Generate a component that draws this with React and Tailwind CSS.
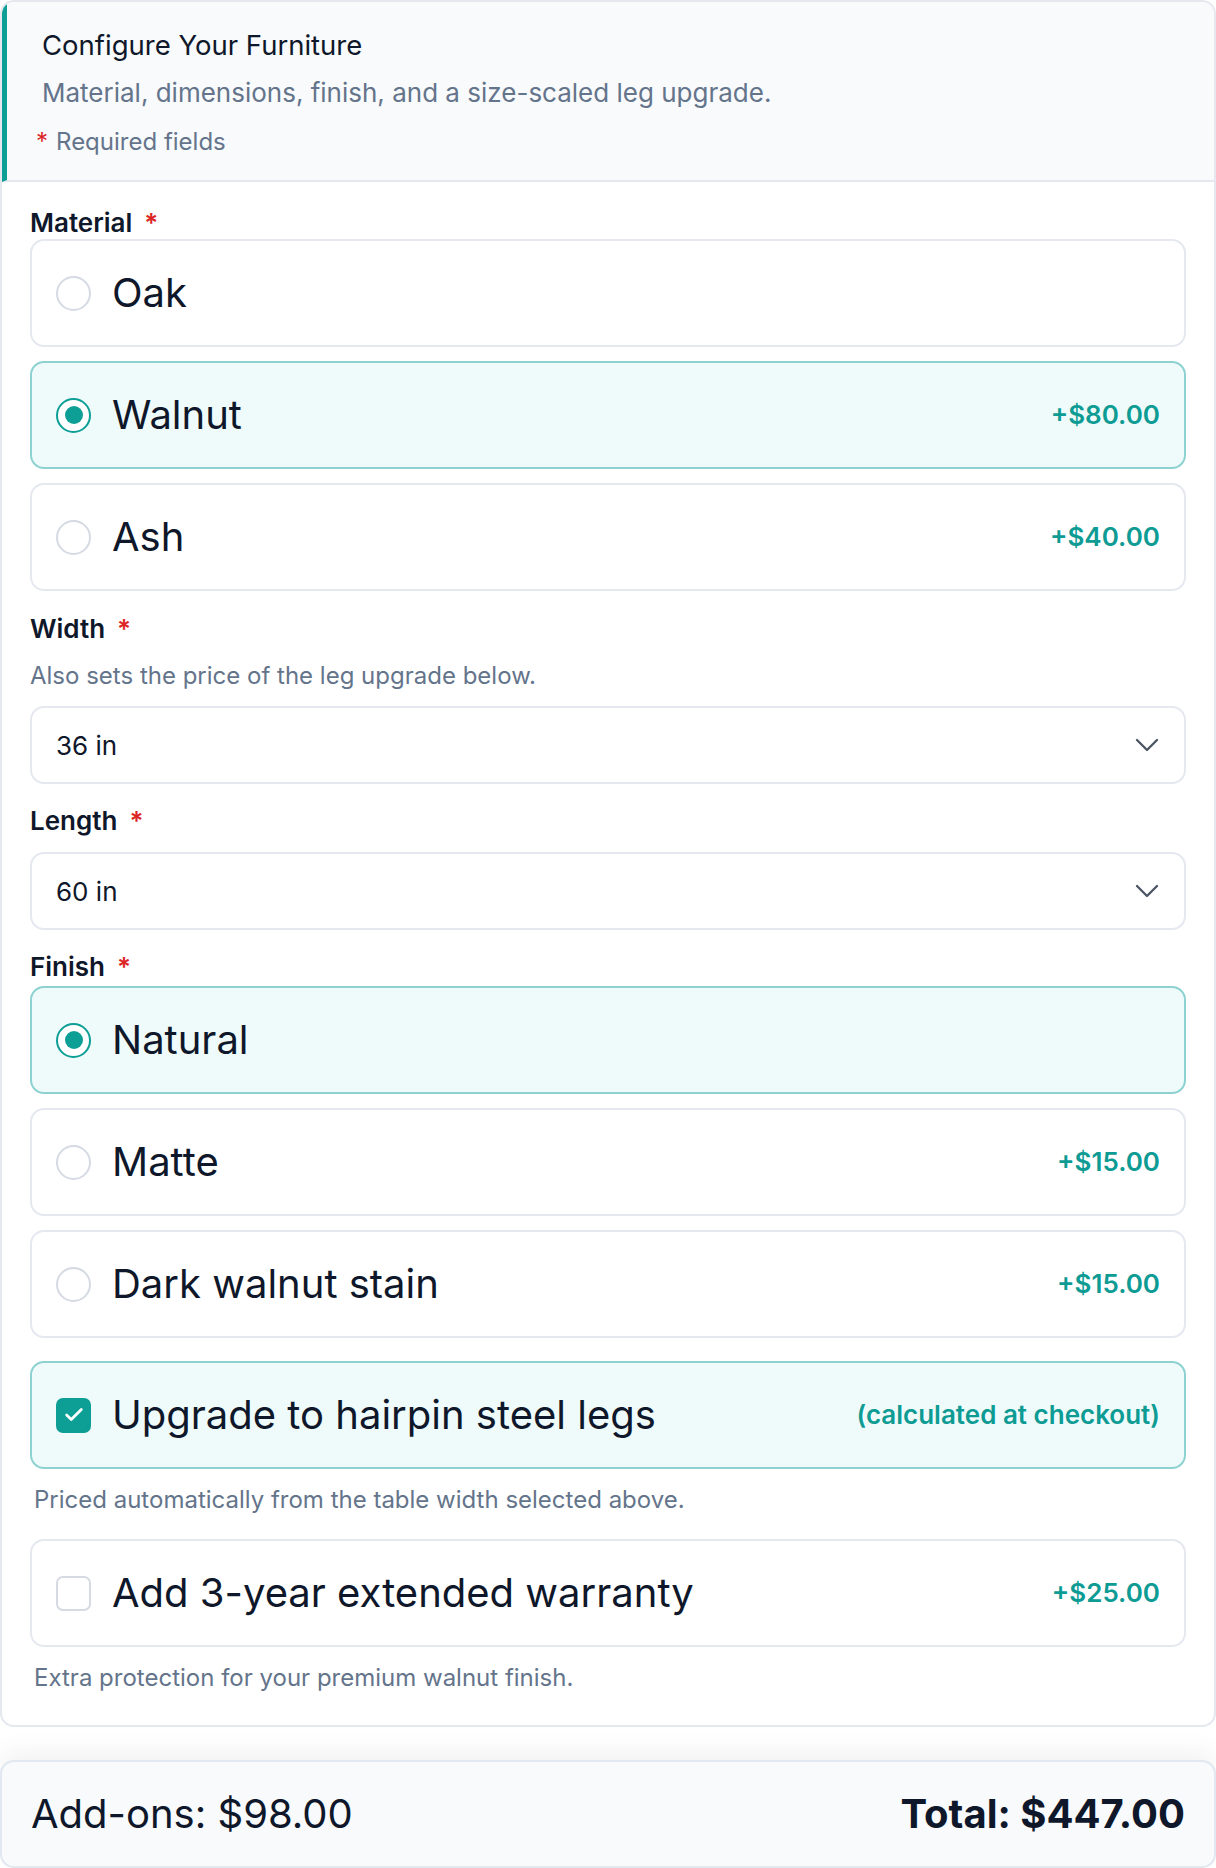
import React, { useState } from "react";
import { ChevronDown, Check } from "lucide-react";

const materials = [
  { id: "oak", name: "Oak", price: null },
  { id: "walnut", name: "Walnut", price: "+$80.00" },
  { id: "ash", name: "Ash", price: "+$40.00" },
];

const finishes = [
  { id: "natural", name: "Natural", price: null },
  { id: "matte", name: "Matte", price: "+$15.00" },
  { id: "dark", name: "Dark walnut stain", price: "+$15.00" },
];

function Label({ children, className = "" }) {
  return (
    <div className={`text-[26px] leading-[32px] font-semibold text-[#0f172a] ${className}`}>
      {children}
      <span className="ml-[12px] text-[#dc2626]">*</span>
    </div>
  );
}

function Radio({ checked }) {
  return (
    <span
      className={`flex h-[35px] w-[35px] shrink-0 items-center justify-center rounded-full border-2 bg-white ${
        checked ? "border-[#0d9e96]" : "border-[#d5dae3]"
      }`}
    >
      {checked && <span className="h-[18px] w-[18px] rounded-full bg-[#0d9e96]" />}
    </span>
  );
}

function Box({ checked }) {
  return (
    <span
      className={`flex h-[35px] w-[35px] shrink-0 items-center justify-center rounded-[7px] border-2 ${
        checked ? "border-[#0d9e96] bg-[#0d9e96]" : "border-[#d5dae3] bg-white"
      }`}
    >
      {checked && <Check size={22} strokeWidth={3} className="text-white" />}
    </span>
  );
}

function OptionCard({ selected, onClick, control, name, price }) {
  return (
    <button
      type="button"
      onClick={onClick}
      className={`flex h-[108px] w-full items-center rounded-[14px] border-2 px-[24px] text-left ${
        selected ? "border-[#8dd2d1] bg-[#effbfb]" : "border-[#e5e8ef] bg-white"
      }`}
    >
      {control}
      <span className="ml-[21px] text-[40px] leading-[44px] text-[#0f172a]">{name}</span>
      {price && (
        <span className="ml-auto text-[26px] leading-[32px] font-semibold text-[#0d9b94]">{price}</span>
      )}
    </button>
  );
}

function Select({ value, onChange, options }) {
  return (
    <div className="relative">
      <select
        value={value}
        onChange={(e) => onChange(e.target.value)}
        className="h-[78px] w-full appearance-none rounded-[14px] border-2 border-[#e5e8ef] bg-white pl-[24px] text-[26px] text-[#0f172a] outline-none"
      >
        {options.map((o) => (
          <option key={o} value={o}>
            {o}
          </option>
        ))}
      </select>
      <ChevronDown
        size={40}
        strokeWidth={1.4}
        className="pointer-events-none absolute right-[19px] top-[19px] text-[#4b5563]"
      />
    </div>
  );
}

export default function App() {
  const [material, setMaterial] = useState("walnut");
  const [finish, setFinish] = useState("natural");
  const [width, setWidth] = useState("36 in");
  const [length, setLength] = useState("60 in");
  const [legs, setLegs] = useState(true);
  const [warranty, setWarranty] = useState(false);

  return (
    <div className="min-h-screen bg-white font-['Inter',sans-serif] text-[#0f172a]">
      {/* Main card */}
      <div className="overflow-hidden rounded-[14px] border-2 border-[#e5e8ef] bg-white">
        {/* Header */}
        <div className="border-b-2 border-l-[5px] border-b-[#e5e8ef] border-l-[#0d9e96] bg-[#f8fafc] pb-[23px] pl-[29px] pr-[28px] pt-[25px]">
          <h1 className="pl-[6px] text-[27.5px] leading-[36px] font-normal text-[#0f172a]">
            Configure Your Furniture
          </h1>
          <p className="mt-[14px] pl-[6px] text-[26px] leading-[32px] text-[#64748b]">
            Material, dimensions, finish, and a size-scaled leg upgrade.
          </p>
          <p className="mt-[18px] text-[24px] leading-[30px] text-[#64748b]">
            <span className="mr-[8px] text-[#dc2626]">*</span>Required fields
          </p>
        </div>

        {/* Body */}
        <div className="px-[28px] pb-[32px] pt-[25px]">
          <Label>Material</Label>
          <div className="flex flex-col gap-[14px]">
            {materials.map((m) => (
              <OptionCard
                key={m.id}
                selected={material === m.id}
                onClick={() => setMaterial(m.id)}
                control={<Radio checked={material === m.id} />}
                name={m.name}
                price={m.price}
              />
            ))}
          </div>

          <Label className="mt-[22px]">Width</Label>
          <p className="mt-[16px] text-[24px] leading-[30px] text-[#64748b]">
            Also sets the price of the leg upgrade below.
          </p>
          <div className="mt-[15px]">
            <Select value={width} onChange={setWidth} options={["24 in", "30 in", "36 in", "42 in", "48 in"]} />
          </div>

          <Label className="mt-[21px]">Length</Label>
          <div className="mt-[15px]">
            <Select value={length} onChange={setLength} options={["48 in", "60 in", "72 in", "84 in"]} />
          </div>

          <Label className="mt-[21px]">Finish</Label>
          <div className="mt-[3px] flex flex-col gap-[14px]">
            {finishes.map((f) => (
              <OptionCard
                key={f.id}
                selected={finish === f.id}
                onClick={() => setFinish(f.id)}
                control={<Radio checked={finish === f.id} />}
                name={f.name}
                price={f.price}
              />
            ))}
          </div>

          <div className="mt-[23px]">
            <OptionCard
              selected={legs}
              onClick={() => setLegs(!legs)}
              control={<Box checked={legs} />}
              name="Upgrade to hairpin steel legs"
              price="(calculated at checkout)"
            />
            <p className="mt-[16px] pl-[4px] text-[24px] leading-[30px] text-[#64748b]">
              Priced automatically from the table width selected above.
            </p>
          </div>

          <div className="mt-[24px]">
            <OptionCard
              selected={warranty}
              onClick={() => setWarranty(!warranty)}
              control={<Box checked={warranty} />}
              name="Add 3-year extended warranty"
              price="+$25.00"
            />
            <p className="mt-[16px] pl-[4px] text-[24px] leading-[30px] text-[#64748b]">
              Extra protection for your premium walnut finish.
            </p>
          </div>
        </div>
      </div>

      {/* Footer summary */}
      <div className="mt-[33px] flex h-[108px] items-center justify-between rounded-[14px] border-2 border-[#e2e8f0] bg-[#f8fafc] px-[29px] shadow-[0_-10px_24px_rgba(15,23,42,0.05)]">
        <span className="text-[40px] leading-[44px] text-[#0f172a]">Add-ons: $98.00</span>
        <span className="text-[40px] leading-[44px] font-bold text-[#0f172a]">Total: $447.00</span>
      </div>
    </div>
  );
}
